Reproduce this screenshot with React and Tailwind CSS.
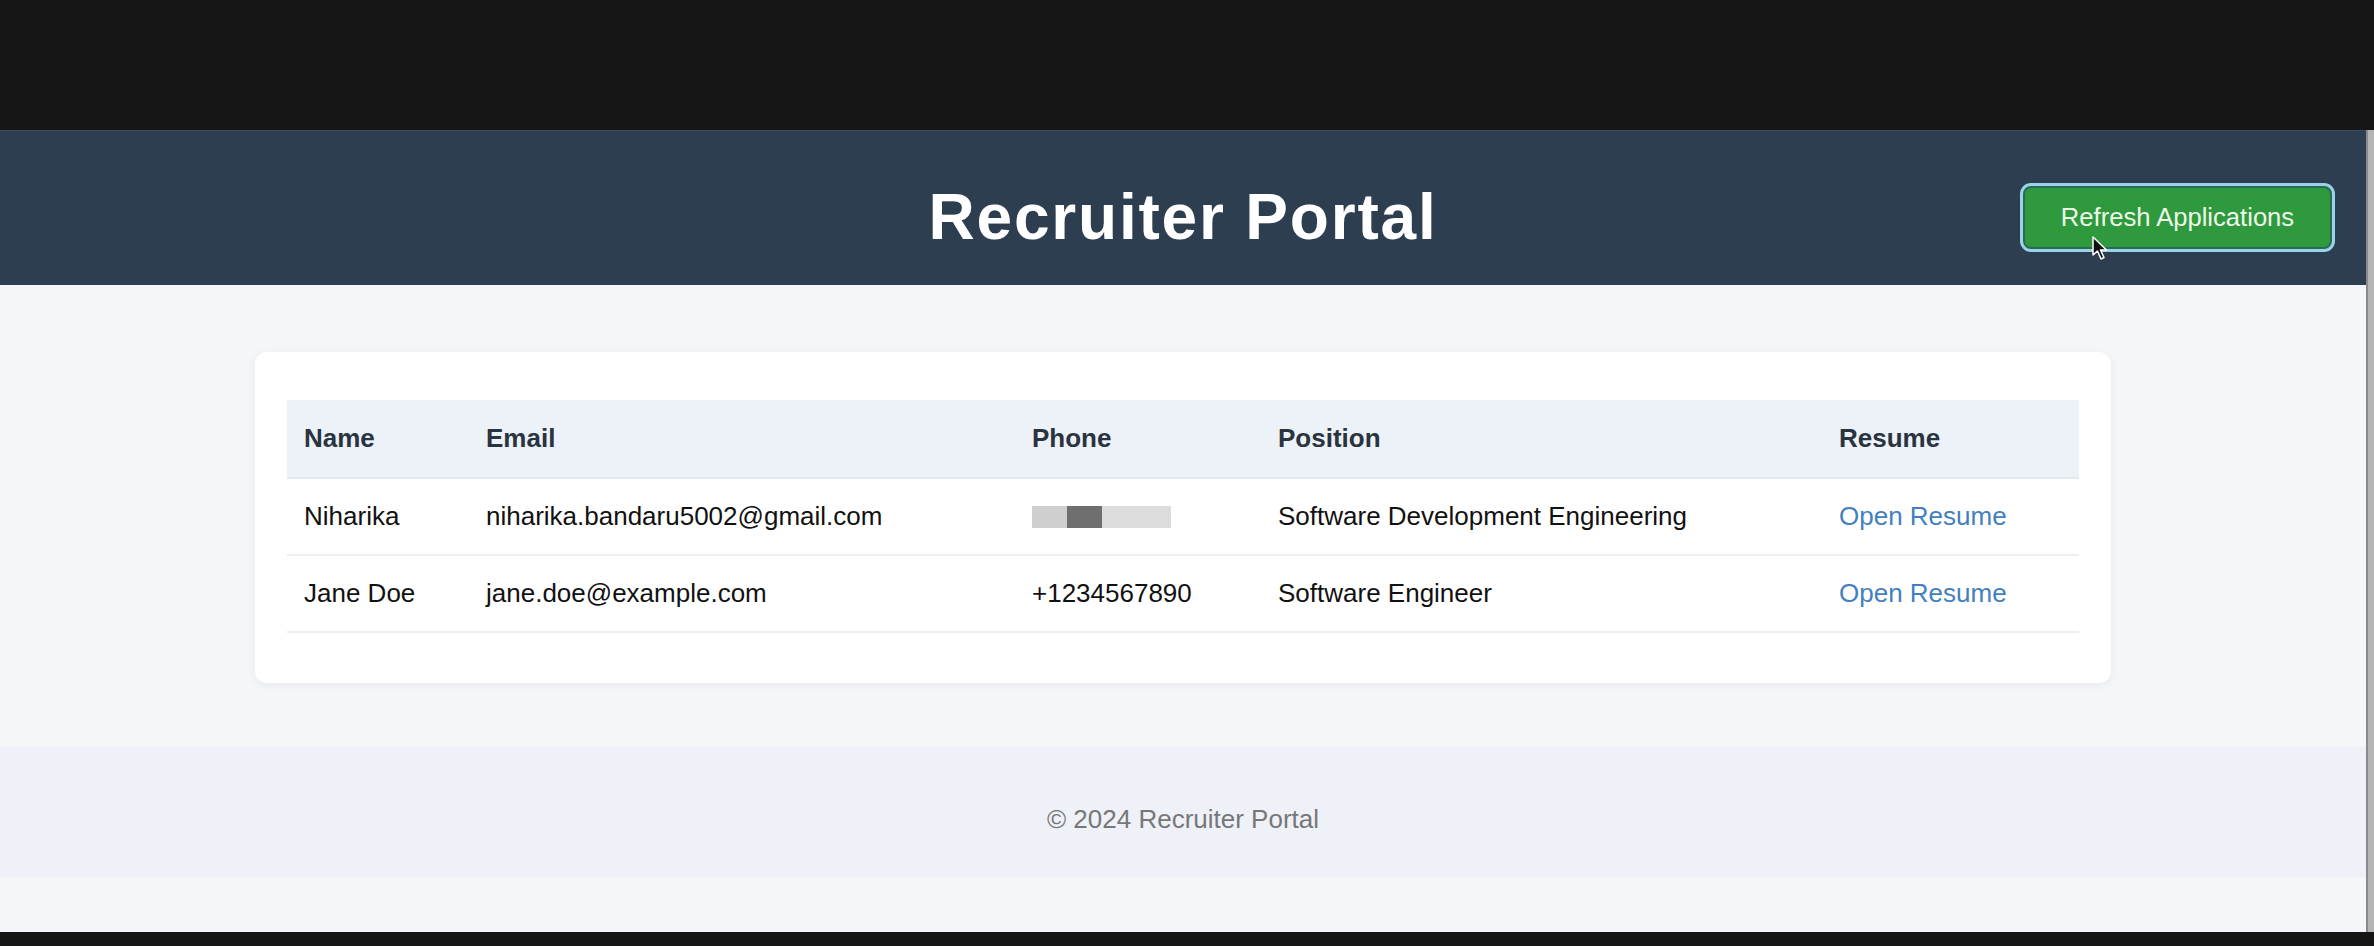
const applications = [
  { name: 'Niharika', email: 'niharika.bandaru5002@gmail.com', phone: null, position: 'Software Development Engineering' },
  { name: 'Jane Doe', email: 'jane.doe@example.com', phone: '+1234567890', position: 'Software Engineer' },
];

const RedactedPhone = () => (
  <div className="flex h-[22px] w-[139px]">
    <div className="w-[35px] bg-[#cfcfcf]" />
    <div className="w-[35px] bg-[#6f6f6f]" />
    <div className="w-[69px] bg-[#dcdcdc]" />
  </div>
);

const Cursor = () => (
  <svg className="absolute left-[2092px] top-[236px] pointer-events-none" width="18" height="26" viewBox="0 0 18 26">
    <path d="M1 1 L1 19 L5.5 15 L9 23 L12 21.5 L8.5 14 L14.5 14 Z" fill="#111" stroke="#fff" strokeWidth="1.5" strokeLinejoin="round" />
  </svg>
);

export default function App() {
  return (
    <div className="relative h-[946px] w-full bg-[#161616] flex flex-col font-['Liberation_Sans',Arial,sans-serif] overflow-hidden">
      <div className="h-[130px] shrink-0" />

      <div className="flex flex-1 min-h-0">
        <div className="flex-1 flex flex-col bg-[#f4f6f9]">
          <header className="h-[155px] shrink-0 bg-[#2c3e50] border-t border-[#3a4c5e] grid grid-cols-[1fr_auto_1fr] items-center pt-[18px]">
            <div />
            <h1 className="text-[64px] font-bold text-white leading-none tracking-[1.8px]">Recruiter Portal</h1>
            <div className="flex justify-end pr-[34px]">
              <button className="w-[309px] h-[63px] rounded-[8px] bg-[#2f9a3d] border-2 border-[#2a6a55] ring-[3px] ring-[#9ad2ea] text-[25.6px] text-[#eef8ea]">
                Refresh Applications
              </button>
            </div>
          </header>

          <main className="pt-[67px] pb-[64px]">
            <div className="w-[1856px] mx-auto bg-white rounded-[12px] shadow-[0_2px_10px_rgba(0,0,0,0.06)] pt-[48px] pb-[50px] px-[32px]">
              <table className="w-full table-fixed border-collapse text-[26px] text-[#111]">
                <colgroup>
                  <col className="w-[182px]" />
                  <col className="w-[546px]" />
                  <col className="w-[246px]" />
                  <col className="w-[561px]" />
                  <col />
                </colgroup>
                <thead>
                  <tr className="bg-[#edf1f8] h-[78px] border-b-2 border-[#e3e7ee]">
                    {['Name', 'Email', 'Phone', 'Position', 'Resume'].map((h) => (
                      <th key={h} className="text-left font-bold text-[#2a3340] pl-[17px]">{h}</th>
                    ))}
                  </tr>
                </thead>
                <tbody>
                  {applications.map((app) => (
                    <tr key={app.email} className="h-[77px] border-b-2 border-[#eceef1]">
                      <td className="pl-[17px]">{app.name}</td>
                      <td className="pl-[17px]">{app.email}</td>
                      <td className="pl-[17px]">{app.phone ? app.phone : <RedactedPhone />}</td>
                      <td className="pl-[17px]">{app.position}</td>
                      <td className="pl-[17px]">
                        <a href="#" className="text-[#4380bf]">Open Resume</a>
                      </td>
                    </tr>
                  ))}
                </tbody>
              </table>
            </div>
          </main>

          <footer className="h-[130px] shrink-0 bg-[#eef1f8] flex items-center justify-center pt-[14px] text-[26px] text-[#777]">
            © 2024 Recruiter Portal
          </footer>
        </div>
        <div className="w-[8px] shrink-0 bg-[#b4b4b4] border-l-2 border-[#8a8a8a]" />
      </div>

      <div className="h-[14px] shrink-0" />
      <Cursor />
    </div>
  );
}
